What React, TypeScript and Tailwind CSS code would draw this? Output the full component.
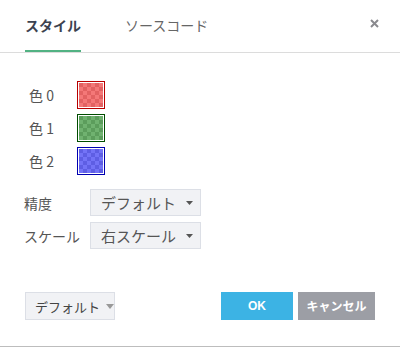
import React from "react";

const font = { fontFamily: '"Noto Sans CJK JP", "Noto Sans", sans-serif' };

function Swatch({ border, light, dark, id }: { border: string; light: string; dark: string; id: string }) {
  return (
    <div className="w-[28px] h-[28px] border p-px bg-white" style={{ borderColor: border }}>
      <svg width="24" height="24" className="block">
        <defs>
          <pattern id={id} width="8" height="8" patternUnits="userSpaceOnUse">
            <rect width="8" height="8" fill={light} />
            <rect width="4" height="4" fill={dark} />
            <rect x="4" y="4" width="4" height="4" fill={dark} />
          </pattern>
        </defs>
        <rect width="24" height="24" fill={`url(#${id})`} />
      </svg>
    </div>
  );
}

function Caret({ color, w = 7, h = 4 }: { color: string; w?: number; h?: number }) {
  return (
    <svg width={w} height={h} viewBox={`0 0 ${w} ${h}`} className="block shrink-0">
      <path d={`M0 0 L${w} 0 L${w / 2} ${h} Z`} fill={color} />
    </svg>
  );
}

function Select({ label }: { label: string }) {
  return (
    <div className="w-[111px] h-[27px] border border-[#dcdfe6] bg-[#f1f2f5] flex items-center justify-between pl-[10px] pr-[7px] text-[15px] text-[#555]">
      <span className="leading-none whitespace-nowrap">{label}</span>
      <Caret color="#555" />
    </div>
  );
}

export default function App() {
  const colors = [
    { label: "色 0", border: "#b80000", light: "#f47878", dark: "#e26262", id: "p0" },
    { label: "色 1", border: "#004d00", light: "#70b270", dark: "#5c9d5c", id: "p1" },
    { label: "色 2", border: "#0000b0", light: "#7373f7", dark: "#5e5ee4", id: "p2" },
  ];
  return (
    <div className="w-[400px] h-[347px] bg-white flex flex-col border-b border-[#bdbdbd]" style={font}>
      <div className="h-[53px] border-b border-[#dcdcdc] flex pl-[25px] pr-[21px]">
        <div className="flex flex-col w-[56px]">
          <div className="pt-[14px] text-[14px] leading-[22px] font-bold text-[#3c4250] whitespace-nowrap">スタイル</div>
          <div className="flex-1" />
          <div className="h-[2px] bg-[#52b283]" />
        </div>
        <div className="ml-[44px] pt-[14px] text-[14px] leading-[22px] text-[#666] whitespace-nowrap">ソースコード</div>
        <div className="flex-1" />
        <div className="pt-[19px]">
          <svg width="9" height="9" viewBox="0 0 9 9" className="block">
            <path d="M1 1 L8 8 M8 1 L1 8" stroke="#8a8a8e" strokeWidth="2" />
          </svg>
        </div>
      </div>

      <div className="flex flex-col gap-[5px] pt-[28px] pl-[29px]">
        {colors.map((c) => (
          <div key={c.id} className="flex items-center h-[28px]">
            <div className="w-[48px] text-[14px] text-[#555] leading-none">{c.label}</div>
            <Swatch border={c.border} light={c.light} dark={c.dark} id={c.id} />
          </div>
        ))}
      </div>

      <div className="flex flex-col gap-[6px] pt-[14px] pl-[24px]">
        <div className="flex items-center">
          <div className="w-[66px] text-[14px] text-[#555] leading-none">精度</div>
          <Select label="デフォルト" />
        </div>
        <div className="flex items-center">
          <div className="w-[66px] text-[14px] text-[#555] leading-none whitespace-nowrap">スケール</div>
          <Select label="右スケール" />
        </div>
      </div>

      <div className="flex items-center pt-[43px] pl-[25px] pr-[25px]">
        <div className="w-[90px] h-[28px] border border-[#dcdfe6] bg-[#f1f2f5] flex items-center pl-[9px] gap-[6px] text-[13px] text-[#444]">
          <span className="leading-none whitespace-nowrap">デフォルト</span>
          <Caret color="#999" w={8} h={5} />
        </div>
        <div className="flex-1" />
        <div className="w-[72px] h-[28px] bg-[#3cb3e4] text-white font-bold text-[12px] flex items-center justify-center" style={{ fontFamily: '"Liberation Sans", "Noto Sans CJK JP", sans-serif' }}>OK</div>
        <div className="ml-[5px] w-[77px] h-[28px] bg-[#9c9ea5] text-white font-bold text-[12px] flex items-center justify-center">キャンセル</div>
      </div>
    </div>
  );
}
